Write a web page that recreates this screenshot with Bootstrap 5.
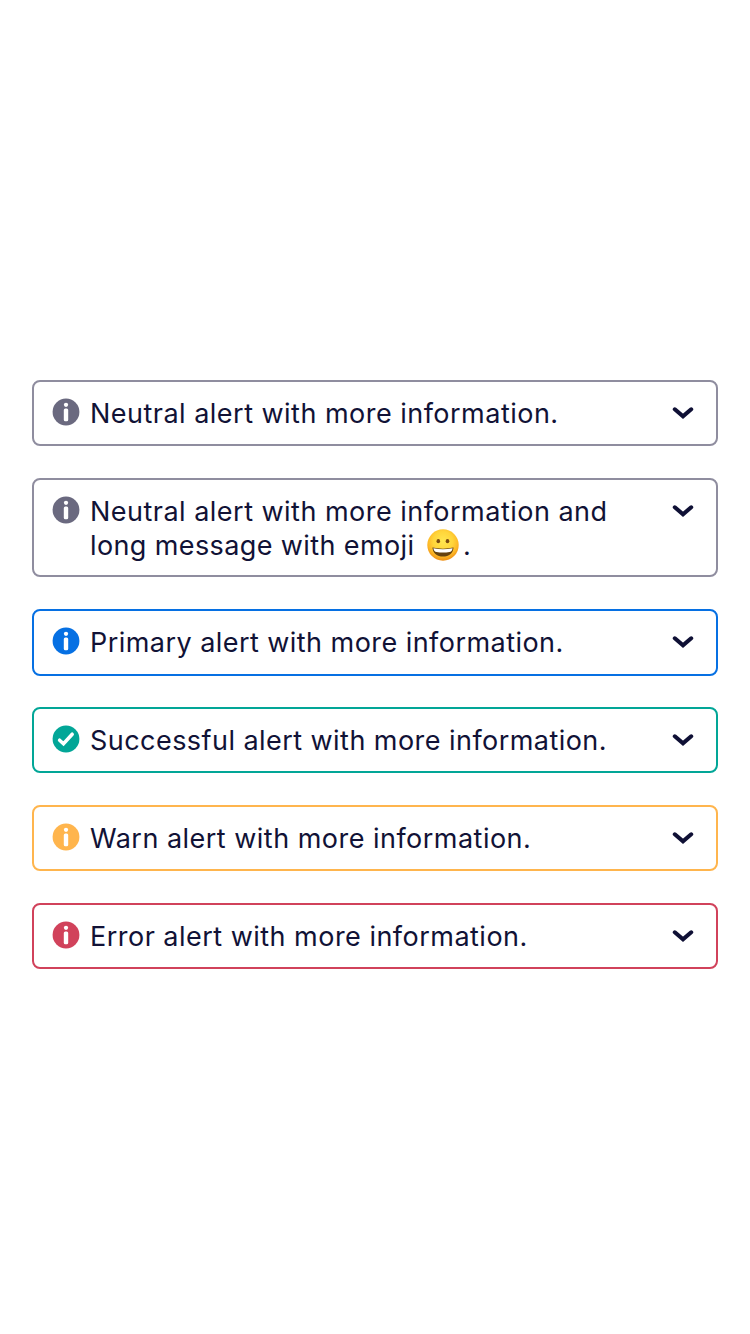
<!DOCTYPE html>
<html lang="en">
<head>
<meta charset="utf-8">
<meta name="viewport" content="width=device-width, initial-scale=1">
<title>Alerts</title>
<link href="https://cdn.jsdelivr.net/npm/bootstrap@5.3.0/dist/css/bootstrap.min.css" rel="stylesheet">
<style>
body{background:#fff;color:#111236;font-family:Inter,"Liberation Sans",sans-serif}
.alert-stack{padding:380px 32px 0}
.notice{--tone:#8f8d9f;--icon:#6a697f;border:2px solid var(--tone);border-radius:8px;padding:14px 22px 0 18px;height:66px;margin-bottom:32px}
.notice.tall{height:99px}
.notice.primary{--tone:#0670e3;--icon:#0670e3;height:67px;margin-bottom:31px}
.notice.success{--tone:#02a697;--icon:#02a697}
.notice.warn{--tone:#ffb54d;--icon:#ffb54d}
.notice.error{--tone:#d1425b;--icon:#d1425b}
.status{width:28px;height:28px;margin-top:2px;color:var(--icon)}
.message{font-size:27px;line-height:34px;letter-spacing:.48px;margin:1px 0 0 10px;white-space:nowrap}
.primary .message,.success .message{letter-spacing:.45px}
.second-line{letter-spacing:.39px}
.chevron{width:22px;height:14px;margin-top:10px}
.emoji{width:34px;height:34px;vertical-align:top;margin:-1px 3px -8px 3.6px}
</style>
</head>
<body>
<svg class="d-none" aria-hidden="true">
  <symbol id="info" viewBox="0 0 28 28"><circle cx="14" cy="14" r="13.4" fill="currentColor"/><circle cx="14" cy="6.8" r="2.15" fill="#fff"/><rect x="11.8" y="10.4" width="4.4" height="12.8" rx="1.5" fill="#fff"/></symbol>
  <symbol id="check" viewBox="0 0 28 28"><circle cx="14" cy="14" r="13.4" fill="currentColor"/><path d="M7.6 15.2 11.5 18.8 20.2 9.2" fill="none" stroke="#fff" stroke-width="3.5" stroke-linecap="round" stroke-linejoin="miter"/></symbol>
  <symbol id="down" viewBox="0 0 22 14"><path d="M2.8 3.3 11 10.3 19.2 3.3" fill="none" stroke="#0f1035" stroke-width="4.1" stroke-linecap="round" stroke-linejoin="miter"/></symbol>
</svg>
<main class="alert-stack d-flex flex-column">
  <div class="notice d-flex align-items-start"><svg class="status flex-shrink-0"><use href="#info"/></svg><div class="message flex-grow-1">Neutral alert with more information.</div><svg class="chevron flex-shrink-0"><use href="#down"/></svg></div>
  <div class="notice tall d-flex align-items-start"><svg class="status flex-shrink-0"><use href="#info"/></svg><div class="message flex-grow-1">Neutral alert with more information and<br><span class="second-line">long message with emoji <svg class="emoji" viewBox="0 0 34 34" role="img" aria-label="grinning face"><defs><radialGradient id="face" cx=".5" cy=".38" r=".62"><stop offset="0" stop-color="#ffe650"/><stop offset=".5" stop-color="#ffd53a"/><stop offset=".78" stop-color="#fdb827"/><stop offset="1" stop-color="#ee8f14"/></radialGradient></defs><circle cx="17" cy="17" r="15.7" fill="url(#face)"/><ellipse cx="12.3" cy="13.2" rx="1.8" ry="2.1" fill="#7a4a10"/><ellipse cx="21.5" cy="13.2" rx="1.8" ry="2.1" fill="#7a4a10"/><path d="M6.4 19.5Q17 21.8 27.6 19.5C27 25.4 23 28.6 17 28.6S7 25.4 6.4 19.5Z" fill="#65420f"/><path d="M7.4 20.2Q17 22.2 26.6 20.2C26.3 22.6 25 23.7 23.5 24Q17 25.2 10.5 24C9 23.7 7.7 22.6 7.4 20.2Z" fill="#fff"/></svg>.</span></div><svg class="chevron flex-shrink-0"><use href="#down"/></svg></div>
  <div class="notice primary d-flex align-items-start"><svg class="status flex-shrink-0"><use href="#info"/></svg><div class="message flex-grow-1">Primary alert with more information.</div><svg class="chevron flex-shrink-0"><use href="#down"/></svg></div>
  <div class="notice success d-flex align-items-start"><svg class="status flex-shrink-0"><use href="#check"/></svg><div class="message flex-grow-1">Successful alert with more information.</div><svg class="chevron flex-shrink-0"><use href="#down"/></svg></div>
  <div class="notice warn d-flex align-items-start"><svg class="status flex-shrink-0"><use href="#info"/></svg><div class="message flex-grow-1">Warn alert with more information.</div><svg class="chevron flex-shrink-0"><use href="#down"/></svg></div>
  <div class="notice error d-flex align-items-start"><svg class="status flex-shrink-0"><use href="#info"/></svg><div class="message flex-grow-1">Error alert with more information.</div><svg class="chevron flex-shrink-0"><use href="#down"/></svg></div>
</main>
<script src="https://cdn.jsdelivr.net/npm/bootstrap@5.3.0/dist/js/bootstrap.bundle.min.js"></script>
</body>
</html>
